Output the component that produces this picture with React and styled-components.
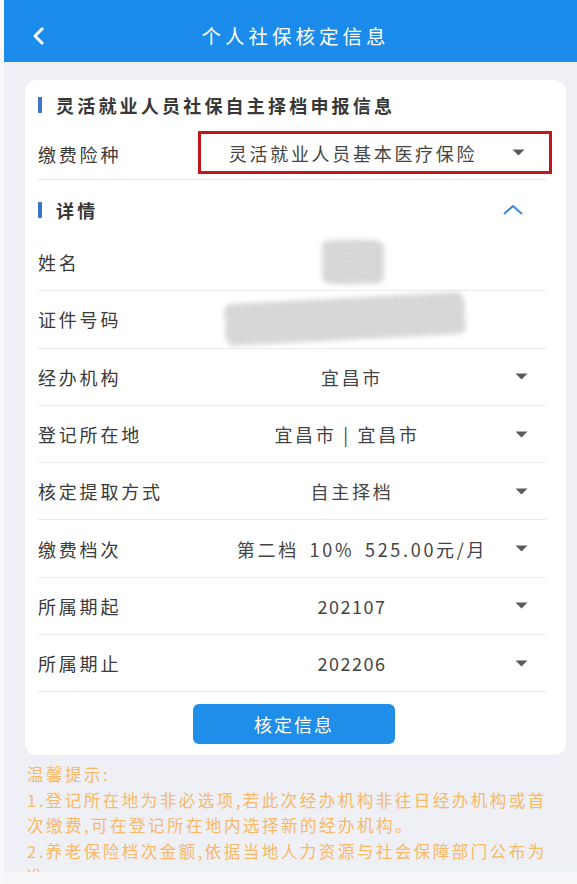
import React from "react";
import styled, { createGlobalStyle } from "styled-components";

const GlobalStyle = createGlobalStyle`
  html, body {
    margin: 0;
    padding: 0;
    background: #eef0f5;
  }
  body {
    font-family: "Noto Sans CJK SC", "Noto Sans", sans-serif;
  }
`;

const rows = [
  { label: "经办机构", value: "宜昌市" },
  { label: "登记所在地", value: "宜昌市 | 宜昌市", shift: -10 },
  { label: "核定提取方式", value: "自主择档" },
  { label: "缴费档次", value: "第二档 10% 525.00元/月", shift: 20, mixed: true },
  { label: "所属期起", value: "202107", num: true },
  { label: "所属期止", value: "202206", num: true },
];

function Caret({ inset }) {
  return (
    <CaretBox inset={inset}>
      <svg width="13" height="7" viewBox="0 0 13 7">
        <path d="M0.5 0.5 L12.5 0.5 L6.5 6.5 Z" fill="#5a5a5a" />
      </svg>
    </CaretBox>
  );
}

function App() {
  return (
    <Page>
      <GlobalStyle />
      <Header>
        <Back>
          <svg width="14" height="20" viewBox="0 0 14 20">
            <path d="M11 2 L3 10 L11 18" stroke="#fff" strokeWidth="3" fill="none" strokeLinejoin="round" />
          </svg>
        </Back>
        <Title>个人社保核定信息</Title>
      </Header>

      <Content>
        <Card>
          <SectionTitle>灵活就业人员社保自主择档申报信息</SectionTitle>
          <Row height={52} top={10}>
            <Label>缴费险种</Label>
            <Highlight>
              <Value>灵活就业人员基本医疗保险</Value>
              <Caret inset />
            </Highlight>
          </Row>

          <DetailHead>
            <SectionTitle flat>详情</SectionTitle>
            <svg width="22" height="12" viewBox="0 0 22 12">
              <path d="M2 10 L11 2 L20 10" stroke="#3b86d8" strokeWidth="2" fill="none" />
            </svg>
          </DetailHead>

          <Row>
            <Label>姓名</Label>
            <Value>
              <Smudge w={62} h={44} />
            </Value>
            <CaretSpace />
          </Row>
          <Row>
            <Label>证件号码</Label>
            <Value>
              <Smudge w={240} h={42} skew />
            </Value>
            <CaretSpace />
          </Row>

          {rows.map((r) => (
            <Row key={r.label}>
              <Label>{r.label}</Label>
              <Value num={r.num} mixed={r.mixed} style={{ paddingLeft: 10 + (r.shift || 0) }}>
                {r.value}
              </Value>
              <Caret />
            </Row>
          ))}

          <ButtonWrap>
            <Button>核定信息</Button>
          </ButtonWrap>
        </Card>

        <Tips>
          <p>温馨提示:</p>
          <p>1.登记所在地为非必选项,若此次经办机构非往日经办机构或首次缴费,可在登记所在地内选择新的经办机构。</p>
          <p>2.养老保险档次金额,依据当地人力资源与社会保障部门公布为准。</p>
        </Tips>
      </Content>
      <BottomBar />
    </Page>
  );
}

export default App;

const Page = styled.div`
  width: 577px;
  height: 884px;
  display: flex;
  flex-direction: column;
  overflow: hidden;
  background: #eef0f5;
  border-left: 4px solid #f7f8fa;
  box-sizing: border-box;
`;

const Header = styled.div`
  height: 62px;
  flex-shrink: 0;
  background: #1b8ceb;
  display: flex;
  align-items: center;
  justify-content: center;
  position: relative;
  padding-top: 8px;
  box-sizing: border-box;
`;

const Back = styled.div`
  position: absolute;
  left: 28px;
  top: 26px;
  display: flex;
`;

const Title = styled.div`
  color: #fff;
  font-size: 19.5px;
  letter-spacing: 4px;
  margin-left: 10px;
`;

const Content = styled.div`
  flex: 1;
  overflow: hidden;
  padding: 18px 11px 0 21px;
`;

const Card = styled.div`
  background: #fff;
  border-radius: 12px;
  padding: 12px 10px 11px 13px;
`;

const SectionTitle = styled.div`
  display: flex;
  align-items: center;
  gap: 14px;
  font-size: 18px;
  font-weight: bold;
  color: #383838;
  height: ${(p) => (p.flat ? "auto" : "26px")};
  letter-spacing: 3.2px;

  &::before {
    content: "";
    width: 4px;
    height: 16px;
    background: #3b74c9;
    border-radius: 1px;
  }
`;

const Row = styled.div`
  display: flex;
  align-items: center;
  box-sizing: border-box;
  height: ${(p) => p.height || 57.3}px;
  margin-top: ${(p) => p.top || 0}px;
  border-bottom: 1px solid #ececec;
  margin-right: 10px;
`;

const Label = styled.div`
  width: 160px;
  flex-shrink: 0;
  font-size: 18px;
  color: #3a3a3a;
  letter-spacing: 2.8px;
`;

const Value = styled.div`
  flex: 1;
  display: flex;
  justify-content: center;
  font-size: 18px;
  color: #444;
  letter-spacing: ${(p) => (p.num ? "1.5px" : "2.7px")};
  word-spacing: ${(p) => (p.mixed ? "4px" : "0")};
  white-space: pre;
`;

const Highlight = styled.div`
  flex: 1;
  display: flex;
  align-items: center;
  align-self: flex-end;
  box-sizing: border-box;
  height: 43px;
  margin-bottom: 5px;
  border: 3px solid #c3161c;
  margin-right: -6px;
  padding-left: 6px;
`;

const CaretBox = styled.div`
  width: ${(p) => (p.inset ? "38px" : "50px")};
  margin-right: ${(p) => (p.inset ? "12px" : "0")};
  display: flex;
  justify-content: center;
  align-items: center;
  flex-shrink: 0;
`;

const CaretSpace = styled.div`
  width: 50px;
  flex-shrink: 0;
`;

const DetailHead = styled.div`
  display: flex;
  align-items: center;
  justify-content: space-between;
  box-sizing: border-box;
  height: 54px;
  padding: 6px 32px 0 0;
`;

const Smudge = styled.div`
  width: ${(p) => p.w}px;
  height: ${(p) => p.h}px;
  background: repeating-linear-gradient(
    ${(p) => (p.skew ? "115deg" : "8deg")},
    #c4c4c4 0px,
    #e4e4e4 3px,
    #b4b4b4 5px,
    #dddddd 8px
  );
  filter: blur(2.5px);
  opacity: 0.8;
  border-radius: 8px;
  transform: ${(p) => (p.skew ? "rotate(-3deg)" : "none")};
  margin-left: ${(p) => (p.skew ? "-4px" : "12px")};
`;

const ButtonWrap = styled.div`
  display: flex;
  justify-content: center;
  padding: 12px 0 0;
  margin-left: -6px;
`;

const Button = styled.button`
  width: 202px;
  height: 40px;
  border: none;
  border-radius: 6px;
  background: #1f8ee8;
  color: #fff;
  font-family: "Noto Sans CJK SC", sans-serif;
  font-size: 18px;
  letter-spacing: 2px;
`;

const Tips = styled.div`
  color: #f6b968;
  font-size: 16.5px;
  letter-spacing: 2.5px;
  line-height: 25.5px;
  padding: 7px 0 0 2px;
  margin-right: 10px;

  p {
    margin: 0;
  }
`;

const BottomBar = styled.div`
  height: 12px;
  flex-shrink: 0;
  background: #f6f6f8;
`;
